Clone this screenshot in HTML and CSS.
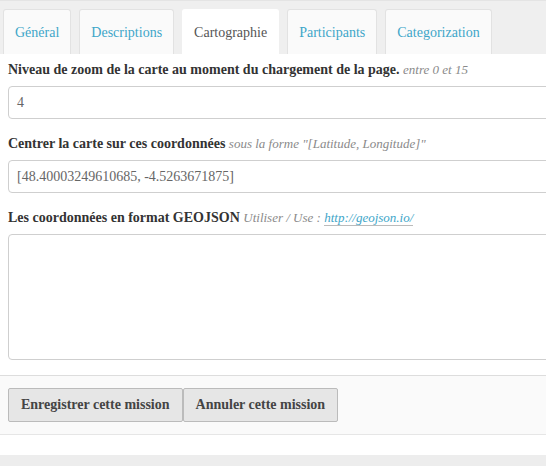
FILE: index.html
```html
<!DOCTYPE html>
<html lang="fr">
<head>
<meta charset="utf-8">
<title>Cartographie</title>
<link rel="stylesheet" href="styles.css">
</head>
<body>
<div class="page">
  <nav class="tabs">
    <a class="tab">Général</a>
    <a class="tab">Descriptions</a>
    <a class="tab active">Cartographie</a>
    <a class="tab">Participants</a>
    <a class="tab">Categorization</a>
  </nav>
  <div class="panel">
    <div class="field">
      <label class="label"><b>Niveau de zoom de la carte au moment du chargement de la page.</b> <i class="hint">entre 0 et 15</i></label>
      <div class="input">4</div>
    </div>
    <div class="field">
      <label class="label"><b>Centrer la carte sur ces coordonnées</b> <i class="hint">sous la forme "[Latitude, Longitude]"</i></label>
      <div class="input">[48.40003249610685, -4.5263671875]</div>
    </div>
    <div class="field">
      <label class="label"><b>Les coordonnées en format GEOJSON</b> <i class="hint">Utiliser / Use : <a class="link">http://geojson.io/</a></i></label>
      <div class="input textarea"></div>
    </div>
  </div>
  <div class="actions">
    <button class="btn">Enregistrer cette mission</button><button class="btn">Annuler cette mission</button>
  </div>
  <div class="bottom"></div>
</div>
</body>
</html>
```
FILE: styles.css
```css
html, body {
  margin: 0;
  padding: 0;
  overflow: hidden;
  background: #fff;
}
body {
  font-family: "Liberation Serif", "Times New Roman", serif;
  font-size: 14px;
  color: #333;
}
.page {
  width: 560px;
}
.tabs {
  display: flex;
  gap: 8px;
  background: #efefef;
  border-top: 1px solid #e4e4e4;
  padding: 8px 0 0 3px;
  height: 45px;
  box-sizing: content-box;
}
.tab {
  display: flex;
  align-items: center;
  padding: 0 11px;
  height: 45px;
  box-sizing: border-box;
  background: #fafafa;
  border: 1px solid #e2e2e2;
  border-bottom: none;
  border-radius: 3px 3px 0 0;
  color: #3ea6c9;
  font-size: 14px;
  padding-top: 1px;
}
.tab.active {
  background: #fff;
  color: #555;
  border-color: #fff;
}
.panel {
  padding: 6px 0 0 8px;
}
.field {
  margin-bottom: 15px;
}
.label {
  display: block;
  line-height: 20px;
  margin-bottom: 6px;
  color: #333;
}
.label b {
  font-weight: bold;
}
.hint {
  color: #8a8a8a;
  font-size: 13px;
}
.link {
  color: #3ea6c9;
  border-bottom: 1px solid #bbb;
}
.input {
  height: 33px;
  box-sizing: border-box;
  border: 1px solid #cfcfcf;
  border-radius: 4px;
  padding: 0 8px;
  line-height: 31px;
  color: #666;
  font-size: 14px;
}
.textarea {
  height: 126px;
}
.actions {
  border-top: 1px solid #ddd;
  border-bottom: 1px solid #e6e6e6;
  background: #fafafa;
  padding: 12px 8px 12px 8px;
  height: 60px;
  box-sizing: border-box;
  display: flex;
}
.btn {
  font-family: "Liberation Serif", "Times New Roman", serif;
  font-size: 14px;
  font-weight: bold;
  color: #444;
  background: #e6e6e6;
  border: 1px solid #bbb;
  border-radius: 2px;
  height: 34px;
  padding: 0 12px;
  margin: 0;
}
.bottom {
  margin-top: 20px;
  height: 20px;
  background: #ededed;
}
```
